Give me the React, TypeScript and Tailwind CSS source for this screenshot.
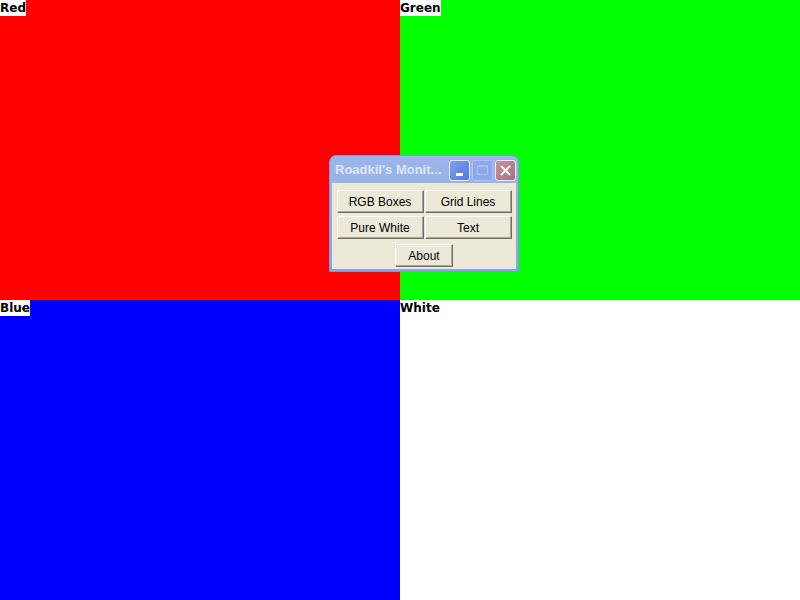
import React from 'react';

function Quadrant({ label, bg }: { label: string; bg: string }) {
  return (
    <div className={`relative ${bg}`}>
      <span className="absolute left-0 top-0 bg-white text-[12px] font-bold leading-[16px] text-black" style={{ fontFamily: '"DejaVu Sans", sans-serif' }}>
        {label}
      </span>
    </div>
  );
}

function XpButton({ children, className = '' }: { children: React.ReactNode; className?: string }) {
  return (
    <button
      className={`h-[23px] border border-t-white border-l-white border-b-[#716f64] border-r-[#716f64] bg-[#ece9d8] text-[12px] leading-none text-black shadow-[inset_-1px_-1px_0_#aca899] ${className}`}
      style={{ fontFamily: '"Liberation Sans", Arial, sans-serif' }}
    >
      {children}
    </button>
  );
}

export default function App() {
  return (
    <div className="relative h-[600px] w-[800px] overflow-hidden">
      <div className="grid h-full w-full grid-cols-2 grid-rows-2">
        <Quadrant label="Red" bg="bg-[#ff0000]" />
        <Quadrant label="Green" bg="bg-[#00ff00]" />
        <Quadrant label="Blue" bg="bg-[#0000ff]" />
        <Quadrant label="White" bg="bg-white" />
      </div>

      {/* inactive window */}
      <div className="absolute left-[329px] top-[155px] flex h-[117px] w-[190px] flex-col rounded-t-[7px] border border-[#7c98e0] bg-gradient-to-b from-[#9cb6ec] to-[#8aa4e6] px-[2px] pb-[2px]">
        <div className="flex h-[27px] shrink-0 items-center pl-[3px] pt-[1px]">
          <span
            className="flex-1 truncate text-[13px] font-bold text-[#dce6f9]"
            style={{ fontFamily: '"Liberation Sans", Arial, sans-serif' }}
          >
            Roadkil's Monit...
          </span>
          <div className="flex gap-[2px]">
            <div className="flex h-[21px] w-[21px] items-end justify-center rounded-[3px] border border-[#e8eefb] bg-gradient-to-br from-[#7f9ff0] to-[#5479e2] pb-[4px]">
              <div className="h-[3px] w-[7px] bg-white" />
            </div>
            <div className="flex h-[21px] w-[21px] items-center justify-center rounded-[3px] border border-[#b0c2f0] bg-[#8ea8ec]">
              <div className="h-[10px] w-[11px] border border-t-[2px] border-[#aabdf0]" />
            </div>
            <div className="flex h-[21px] w-[21px] items-center justify-center rounded-[3px] border border-[#e8eefb] bg-gradient-to-br from-[#c9929c] to-[#a9707d]">
              <svg width="11" height="11" viewBox="0 0 11 11">
                <path d="M1.5 1.5 L9.5 9.5 M9.5 1.5 L1.5 9.5" stroke="white" strokeWidth="2" strokeLinecap="round" />
              </svg>
            </div>
          </div>
        </div>
        <div className="flex flex-1 flex-col items-center bg-[#ece9d8] pt-[7px]">
          <div className="grid grid-cols-2 gap-x-[1px] gap-y-[3px]">
            <XpButton className="w-[87px]">RGB Boxes</XpButton>
            <XpButton className="w-[87px]">Grid Lines</XpButton>
            <XpButton className="w-[87px]">Pure White</XpButton>
            <XpButton className="w-[87px]">Text</XpButton>
          </div>
          <XpButton className="mt-[5px] w-[58px]">About</XpButton>
        </div>
      </div>
    </div>
  );
}
